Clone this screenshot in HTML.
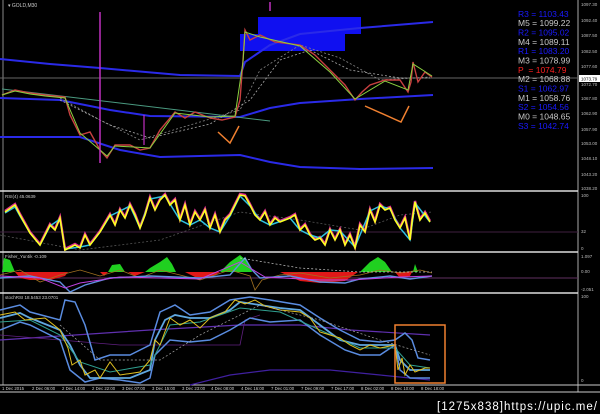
<!DOCTYPE html>
<html><head><meta charset="utf-8"><style>
html,body{margin:0;padding:0;background:#000;width:600px;height:414px;overflow:hidden}
svg{display:block}
text{font-family:"Liberation Sans",sans-serif}
</style></head><body>
<svg width="600" height="414" viewBox="0 0 600 414" xmlns="http://www.w3.org/2000/svg">
<rect width="600" height="414" fill="#000"/>
<!-- frame lines -->
<line x1="3" y1="0" x2="3" y2="385" stroke="#888" stroke-width="1"/>
<line x1="578" y1="0" x2="578" y2="392" stroke="#aaa" stroke-width="1"/>
<line x1="0" y1="191" x2="578" y2="191" stroke="#ddd" stroke-width="1.5"/>
<line x1="0" y1="252" x2="578" y2="252" stroke="#ddd" stroke-width="1.5"/>
<line x1="0" y1="293" x2="578" y2="293" stroke="#ddd" stroke-width="1.5"/>
<line x1="0" y1="385" x2="600" y2="385" stroke="#ccc" stroke-width="1"/>
<line x1="0" y1="392" x2="600" y2="392" stroke="#ccc" stroke-width="1"/>
<text x="8" y="7" fill="#ccc" font-size="5">▾ GOLD,M30</text>

<!-- main chart -->
<rect x="258" y="17" width="103" height="17" fill="#1010f0"/>
<rect x="240" y="34" width="105" height="17" fill="#1010f0"/>
<line x1="0" y1="78" x2="578" y2="78" stroke="#666" stroke-width="1"/>
<polyline fill="none" stroke="#2a2ae8" stroke-width="2" points="0,59 50,64 100,68 180,75 240,76 245,62 270,45 300,34 360,28 433,22"/>
<polyline fill="none" stroke="#2a2ae8" stroke-width="2" points="0,98 60,100 110,110 150,116 240,117 270,108 300,103 360,99 433,95"/>
<polyline fill="none" stroke="#2a2ae8" stroke-width="2" points="0,137 80,137 120,150 160,157 240,155 270,162 300,167 360,169 433,168"/>
<line x1="2" y1="89" x2="270" y2="121" stroke="#4a9a80" stroke-width="1"/>
<polyline fill="none" stroke="#888" stroke-width="0.8" stroke-dasharray="2,2" points="60,98 100,120 140,140 200,122 240,110 260,70 300,45 340,58 380,80 430,77"/>
<polyline fill="none" stroke="#aaa" stroke-width="0.8" stroke-dasharray="2,2" points="60,100 110,125 150,138 210,124 250,100 280,60 310,50 350,70 400,78 430,78"/>
<polyline fill="none" stroke="#c84040" stroke-width="1.4" points="2,95 15,90 30,93 45,95 65,97 70,115 80,135 90,132 100,150 107,158 115,145 130,145 140,150 150,148 160,130 175,112 185,118 195,112 210,118 222,120 235,117 240,100 243,60 245,30 250,40 260,35 275,42 300,45 315,55 330,70 345,85 355,100 362,92 370,85 385,80 400,80 408,92 411,82 413,62 418,82 425,72 432,77"/>
<polyline fill="none" stroke="#8ad040" stroke-width="1" points="2,95 15,91 30,94 45,96 65,98 80,133 100,150 107,156 115,146 150,148 175,113 210,117 235,116 243,62 245,32 260,37 300,46 330,72 355,99 385,81 408,90 413,64 432,76"/>
<line x1="100" y1="12" x2="100" y2="163" stroke="#c030c0" stroke-width="1.5"/>
<line x1="270" y1="2" x2="270" y2="11" stroke="#c030c0" stroke-width="1.5"/>
<line x1="144" y1="115" x2="144" y2="145" stroke="#c030c0" stroke-width="1.2"/>
<polyline fill="none" stroke="#f08030" stroke-width="1.5" points="218,132 230,143 239,126"/>
<polyline fill="none" stroke="#f08030" stroke-width="1.5" points="365,106 401,122 409,106"/>

<!-- pivot labels -->
<g font-size="8.5">
<text x="518" y="17" fill="#1a1aff">R3 = 1103.43</text>
<text x="518" y="26" fill="#c8c8c8">M5 = 1099.22</text>
<text x="518" y="35.5" fill="#1a1aff">R2 = 1095.02</text>
<text x="518" y="45" fill="#c8c8c8">M4 = 1089.11</text>
<text x="518" y="54" fill="#1a1aff">R1 = 1083.20</text>
<text x="518" y="63.5" fill="#c8c8c8">M3 = 1078.99</text>
<text x="518" y="73" fill="#ff2020">P&#160;&#160;= 1074.79</text>
<text x="518" y="82" fill="#c8c8c8">M2 = 1068.88</text>
<text x="518" y="91.5" fill="#1a1aff">S1 = 1062.97</text>
<text x="518" y="101" fill="#c8c8c8">M1 = 1058.76</text>
<text x="518" y="110" fill="#1a1aff">S2 = 1054.56</text>
<text x="518" y="119.5" fill="#c8c8c8">M0 = 1048.65</text>
<text x="518" y="129" fill="#1a1aff">S3 = 1042.74</text>
</g>
<g font-size="4.5" fill="#bbb">
<text x="581" y="6">1097.30</text><text x="581" y="22">1092.40</text><text x="581" y="37">1087.50</text>
<text x="581" y="53">1082.50</text><text x="581" y="68">1077.60</text><text x="581" y="86">1072.70</text>
<text x="581" y="100">1067.80</text><text x="581" y="115">1062.90</text><text x="581" y="131">1057.90</text>
<text x="581" y="145">1053.00</text><text x="581" y="160">1048.10</text><text x="581" y="176">1043.20</text>
<text x="581" y="190">1038.20</text>
</g>
<rect x="579" y="75" width="21" height="7" fill="#fff"/>
<text x="581" y="80.5" font-size="4.5" fill="#000">1073.79</text>

<!-- RSI panel -->
<text x="5" y="198" fill="#ccc" font-size="4.5">RSI(4) 45.0639</text>
<line x1="0" y1="232" x2="578" y2="232" stroke="#402040" stroke-width="1"/>
<g font-size="4.5" fill="#bbb"><text x="581" y="197">100</text><text x="581" y="233">32</text><text x="581" y="250">0</text></g>
<polyline fill="none" stroke="#555" stroke-width="0.8" stroke-dasharray="2,2" points="0,235 80,250 160,240 240,212 300,220 360,230 400,215 432,212"/>
<polyline fill="none" stroke="#e03090" stroke-width="2.4" points="5,211 15,204 20,214 30,232 40,244 50,224 55,229 60,217 65,249 75,244 80,247 85,234 90,244 100,231 110,214 115,224 120,209 125,217 130,204 135,214 140,227 145,214 150,197 155,209 160,199 165,194 170,204 175,199 180,219 185,204 190,224 195,211 200,219 205,209 210,227 215,214 220,231 225,219 230,214 240,194 245,195 250,204 255,214 260,219 265,211 270,224 275,217 280,221 290,217 295,214 300,229 305,224 310,234 315,239 320,237 325,244 330,229 335,239 340,229 345,244 350,234 355,247 360,224 365,231 370,209 375,221 380,204 385,209 390,207 395,219 400,227 405,217 410,239 412,221 415,201 420,219 425,212 430,221"/>
<polyline fill="none" stroke="#30c0e0" stroke-width="1.5" points="5,213 15,207 20,216 30,233 40,245 50,226 60,219 65,249 80,247 90,245 100,232 110,216 120,211 130,206 140,228 150,199 165,196 180,220 190,225 200,220 210,228 220,232 230,216 240,196 250,206 260,220 270,225 290,218 300,230 310,235 320,238 330,230 340,231 355,247 370,211 380,206 390,209 400,228 410,240 415,203 430,222"/>
<polyline fill="none" stroke="#ffff20" stroke-width="1.6" points="5,212 15,205 20,215 30,233 40,245 50,225 55,230 60,218 65,250 75,245 80,248 85,235 90,245 100,232 110,215 115,225 120,210 125,218 130,205 135,215 140,228 145,215 150,198 155,210 160,200 165,195 170,205 175,200 180,220 185,205 190,225 195,212 200,220 205,210 210,228 215,215 220,232 225,220 230,215 240,195 245,196 250,205 255,215 260,220 265,212 270,225 275,218 280,222 290,218 295,215 300,230 305,225 310,235 315,240 320,238 325,245 330,230 335,240 340,230 345,245 350,235 355,248 360,225 365,232 370,210 375,222 380,205 385,210 390,208 395,220 400,228 405,218 410,240 412,222 415,202 420,220 425,213 430,222"/>

<!-- Fisher panel -->
<text x="5" y="258" fill="#ccc" font-size="4.5">Fisher_Yur4ik -0.109</text>
<g font-size="4.5" fill="#bbb"><text x="581" y="258">1.097</text><text x="581" y="273">0.00</text><text x="581" y="291">-2.051</text></g>
<line x1="0" y1="278" x2="578" y2="278" stroke="#603060" stroke-width="1"/>
<g fill="#20d020">
<polygon points="2,272 4,258 10,260 15,272"/>
<polygon points="108,272 112,265 120,264 125,272"/>
<polygon points="145,272 150,268 160,262 167,257 172,264 176,272"/>
<polygon points="220,272 230,262 240,255 248,262 252,272"/>
<polygon points="360,272 370,262 378,257 385,262 392,272"/>
<polygon points="413,272 415,264 418,272"/>
</g>
<g fill="#e01818">
<polygon points="15,272 20,278 30,280 50,280 65,276 68,272"/>
<polygon points="100,272 104,276 108,272"/>
<polygon points="128,272 135,276 145,272"/>
<polygon points="185,272 195,277 210,278 220,272"/>
<polygon points="280,272 300,281 320,283 345,281 358,272"/>
<polygon points="395,272 400,278 410,276 412,272"/>
</g>
<polyline fill="none" stroke="#a07020" stroke-width="0.8" points="0,275 20,270 40,282 60,275 80,270 100,276 120,270 140,278 160,270 180,275 200,280 230,270 250,276 255,290 262,280 280,275 300,273 330,278 360,275 380,270 400,273 420,270 432,273"/>
<polyline fill="none" stroke="#6090e0" stroke-width="1.4" points="0,278 30,276 60,282 70,292 85,285 110,278 150,276 200,278 230,275 245,258 252,270 260,278 290,276 320,282 345,283 360,279 390,276 410,279 432,276"/>
<polyline fill="none" stroke="#c040e0" stroke-width="1" points="0,276 40,278 65,288 80,283 120,277 200,279 240,262 250,268 265,277 320,280 350,280 400,277 432,276"/>
<polyline fill="none" stroke="#ccc" stroke-width="0.7" stroke-dasharray="2,2" points="240,258 300,268 360,272 432,272"/>

<!-- Stoch panel -->
<text x="5" y="299" fill="#ccc" font-size="4.5">stochRSI 18.5453 23.0701</text>
<g font-size="4.5" fill="#bbb"><text x="581" y="298">100</text><text x="581" y="382">0</text></g>
<polyline fill="none" stroke="#6030b0" stroke-width="1.2" points="0,340 60,336 150,330 240,325 300,325 350,330 430,335"/>
<polyline fill="none" stroke="#4020a0" stroke-width="1.2" points="190,385 230,375 270,370 330,370 380,375 430,380"/>
<polyline fill="none" stroke="#602080" stroke-width="0.8" points="0,335 60,340 120,345 200,345 240,345 245,320 260,315"/>
<polyline fill="none" stroke="#5a8ce0" stroke-width="1.5" points="0,310 20,305 30,312 60,320 65,300 75,302 85,325 95,360 110,355 130,355 150,345 160,312 175,305 190,315 210,312 230,300 250,297 270,300 300,305 320,318 340,330 360,340 380,342 395,340 405,333 412,340 418,358 430,360"/>
<polyline fill="none" stroke="#5a8ce0" stroke-width="1.5" points="0,330 20,322 30,325 60,340 70,370 85,382 100,378 120,380 140,383 150,378 155,355 170,340 190,342 210,340 230,330 250,318 270,322 300,320 320,335 345,350 360,355 380,355 395,345 400,370 410,378 430,378"/>
<polyline fill="none" stroke="#60a8e0" stroke-width="1.8" points="0,318 20,313 30,318 60,330 70,345 80,365 90,378 110,378 130,378 150,370 155,340 165,320 175,315 190,318 210,318 230,310 240,302 260,305 280,308 300,310 320,325 340,340 360,345 380,345 395,345 400,360 410,370 430,370"/>
<polyline fill="none" stroke="#30a090" stroke-width="1" points="0,322 30,320 60,335 80,362 110,372 150,365 170,325 200,322 240,308 280,312 320,330 360,348 395,348 410,365 430,368"/>
<polyline fill="none" stroke="#e0c020" stroke-width="1" points="0,315 15,312 25,320 45,318 60,330 68,348 72,365 80,360 85,375 95,370 100,378 110,362 120,375 140,372 150,360 155,340 160,345 170,318 180,325 190,320 200,328 210,318 225,312 235,300 245,304 255,300 265,306 280,310 300,312 310,318 320,332 340,338 350,345 360,350 370,345 380,348 395,345 398,370 402,358 405,375 410,365 415,372 425,368 430,368"/>
<polyline fill="none" stroke="#aaa" stroke-width="0.7" stroke-dasharray="2,2" points="60,325 100,360 160,360 200,335 260,305 320,320 380,340 430,355"/>
<rect x="395" y="325" width="50" height="58" fill="none" stroke="#f08030" stroke-width="1.5"/>

<!-- time axis -->
<g font-size="4.3" fill="#ccc">
<text x="2" y="390">1 Dec 2015</text><text x="32" y="390">2 Dec 06:00</text><text x="62" y="390">2 Dec 14:00</text>
<text x="92" y="390">2 Dec 22:00</text><text x="122" y="390">3 Dec 07:00</text><text x="152" y="390">3 Dec 15:00</text>
<text x="182" y="390">3 Dec 23:00</text><text x="211" y="390">4 Dec 08:00</text><text x="241" y="390">4 Dec 16:00</text>
<text x="271" y="390">7 Dec 01:00</text><text x="301" y="390">7 Dec 09:00</text><text x="331" y="390">7 Dec 17:00</text>
<text x="361" y="390">8 Dec 02:00</text><text x="391" y="390">8 Dec 10:00</text><text x="421" y="390">8 Dec 18:00</text>
</g>
<text x="437" y="410" fill="#fff" font-size="11.5" font-family="Liberation Mono,monospace" textLength="160">[1275x838]https://upic.me/</text>
</svg>
</body></html>
